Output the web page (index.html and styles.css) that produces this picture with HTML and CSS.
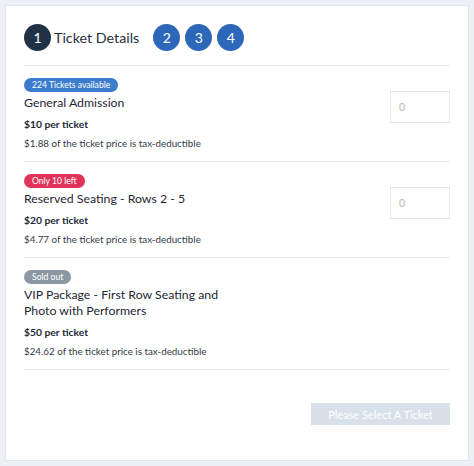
FILE: index.html
```html
<!DOCTYPE html>
<html>
<head>
<meta charset="utf-8">
<link rel="stylesheet" href="styles.css">
</head>
<body>
<div class="card">
  <div class="steps">
    <span class="step step-active">1</span>
    <span class="step-label">Ticket Details</span>
    <span class="step">2</span>
    <span class="step">3</span>
    <span class="step">4</span>
  </div>
  <div class="items">
    <div class="item">
      <div class="info">
        <span class="badge badge-blue">224 Tickets available</span>
        <div class="title">General Admission</div>
        <div class="price">$10 per ticket</div>
        <div class="desc">$1.88 of the ticket price is tax-deductible</div>
      </div>
      <input class="qty" type="text" placeholder="0">
    </div>
    <div class="item">
      <div class="info">
        <span class="badge badge-red">Only 10 left</span>
        <div class="title">Reserved Seating - Rows 2 - 5</div>
        <div class="price">$20 per ticket</div>
        <div class="desc">$4.77 of the ticket price is tax-deductible</div>
      </div>
      <input class="qty" type="text" placeholder="0">
    </div>
    <div class="item">
      <div class="info">
        <span class="badge badge-gray">Sold out</span>
        <div class="title">VIP Package - First Row Seating and Photo with Performers</div>
        <div class="price">$50 per ticket</div>
        <div class="desc">$24.62 of the ticket price is tax-deductible</div>
      </div>
    </div>
  </div>
  <div class="actions">
    <button class="submit" type="button">Please Select A Ticket</button>
  </div>
</div>
</body>
</html>
```
FILE: styles.css
```css
* { box-sizing: border-box; }
html, body { margin: 0; padding: 0; }
body {
  background: #edf1f6;
  padding: 5px;
  font-family: Lato, "Open Sans", sans-serif;
  color: #1d2733;
}
.card {
  width: 464px;
  height: 456px;
  background: #ffffff;
  border: 1px solid #e1e6ed;
  padding: 18px 18px 0 18px;
}
.steps {
  display: flex;
  align-items: center;
  height: 27px;
  margin-bottom: 14px;
}
.step {
  width: 27px;
  height: 27px;
  border-radius: 50%;
  background: #2c67b9;
  color: #fff;
  font-size: 14px;
  display: flex;
  align-items: center;
  justify-content: center;
  margin-right: 5px;
}
.step-active {
  background: #203246;
  margin-right: 3px;
}
.step-label {
  font-size: 14.3px;
  color: #26303c;
  margin-right: 14px;
}
.item {
  display: flex;
  justify-content: space-between;
  align-items: flex-start;
  border-top: 1px solid #e7eaee;
  padding: 12px 0 10px 0;
}
.item:last-child { border-bottom: 1px solid #e7eaee; }
.info { display: flex; flex-direction: column; align-items: flex-start; }
.badge {
  display: inline-block;
  height: 14px;
  line-height: 14px;
  padding: 0 8px;
  border-radius: 7px;
  color: #fff;
  font-size: 8.6px;
}
.badge-blue { background: #3b7dcc; }
.badge-red { background: #e13259; }
.badge-gray { background: #8b97a3; }
.title {
  font-size: 12.3px;
  line-height: 16px;
  margin-top: 3px;
  max-width: 212px;
  color: #1d2733;
}
.price {
  font-size: 10.3px;
  font-weight: bold;
  line-height: 16px;
  margin-top: 5px;
  color: #222932;
}
.desc {
  font-size: 9.8px;
  line-height: 16px;
  margin-top: 3px;
  color: #333c47;
}
.qty {
  margin-top: 13px;
  width: 60px;
  height: 32px;
  border: 1px solid #e4e7ea;
  padding: 0 8px;
  font-family: Lato, sans-serif;
  font-size: 10.5px;
  color: #333;
  outline: none;
}
.qty::placeholder { color: #b5b9be; }
.actions {
  display: flex;
  justify-content: flex-end;
  margin-top: 33px;
}
.submit {
  width: 139px;
  height: 22px;
  border: none;
  background: #d8e1e9;
  color: #ffffff;
  font-family: Lato, sans-serif;
  font-size: 11px;
  padding: 0;
}
```
